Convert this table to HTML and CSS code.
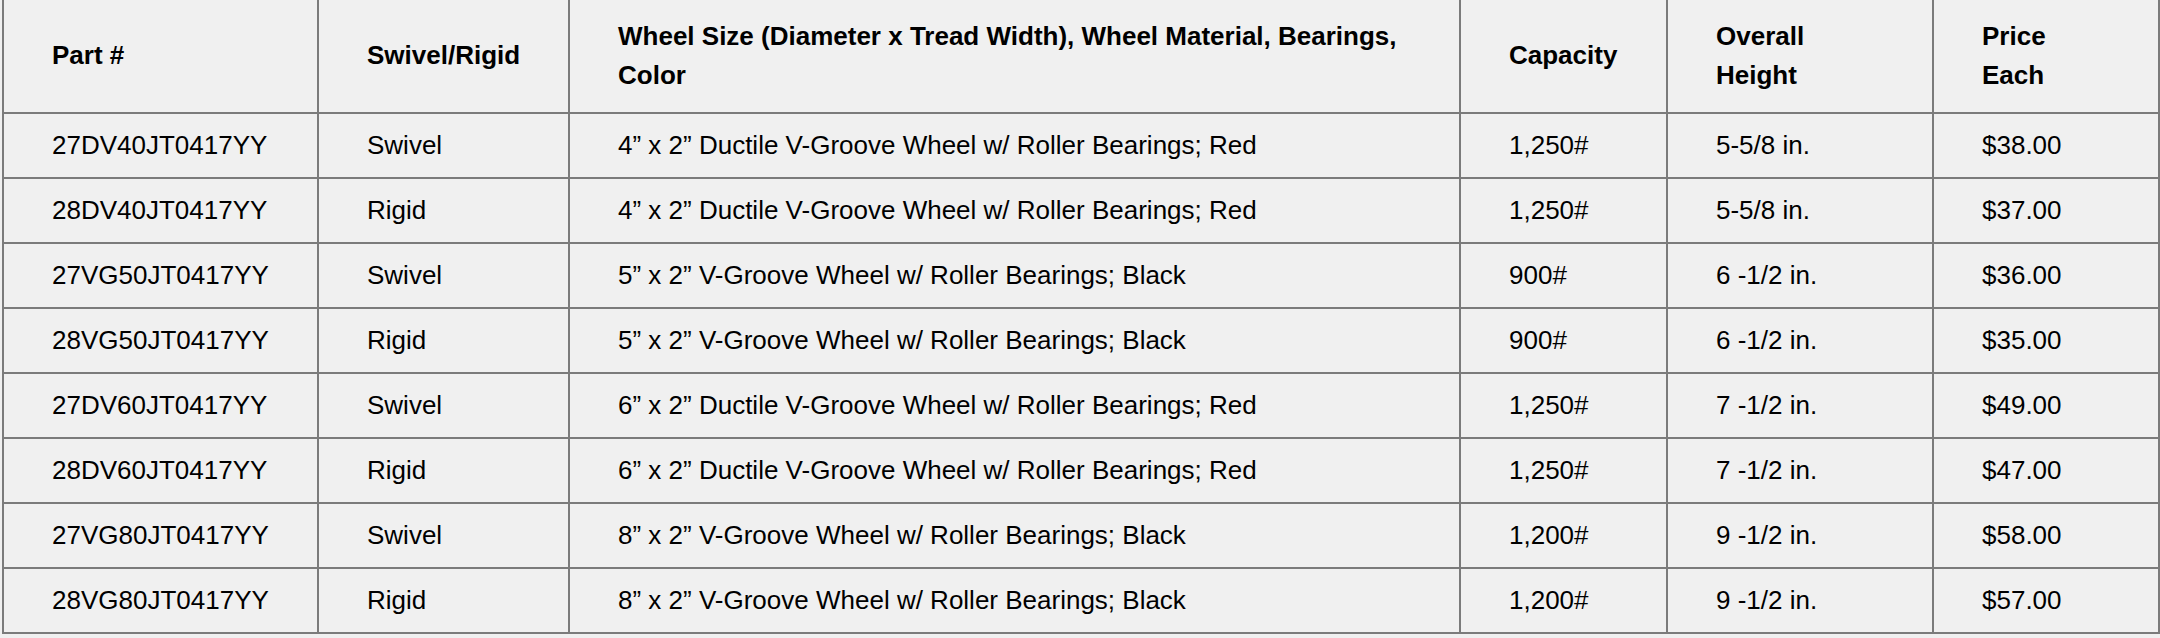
FILE: index.html
```html
<!DOCTYPE html>
<html lang="en">
<head>
<meta charset="utf-8">
<title>V-Groove Casters</title>
<link rel="stylesheet" href="styles.css">
</head>
<body>
<table class="spec-table">
  <colgroup>
    <col class="c-part">
    <col class="c-type">
    <col class="c-wheel">
    <col class="c-cap">
    <col class="c-height">
    <col class="c-price">
  </colgroup>
  <thead>
    <tr>
      <th>Part #</th>
      <th>Swivel/Rigid</th>
      <th>Wheel Size (Diameter x Tread Width), Wheel Material, Bearings, Color</th>
      <th>Capacity</th>
      <th>Overall<br>Height</th>
      <th>Price<br>Each</th>
    </tr>
  </thead>
  <tbody>
    <tr><td>27DV40JT0417YY</td><td>Swivel</td><td>4” x 2” Ductile V-Groove Wheel w/ Roller Bearings; Red</td><td>1,250#</td><td>5-5/8 in.</td><td>$38.00</td></tr>
    <tr><td>28DV40JT0417YY</td><td>Rigid</td><td>4” x 2” Ductile V-Groove Wheel w/ Roller Bearings; Red</td><td>1,250#</td><td>5-5/8 in.</td><td>$37.00</td></tr>
    <tr><td>27VG50JT0417YY</td><td>Swivel</td><td>5” x 2” V-Groove Wheel w/ Roller Bearings; Black</td><td>900#</td><td>6 -1/2 in.</td><td>$36.00</td></tr>
    <tr><td>28VG50JT0417YY</td><td>Rigid</td><td>5” x 2” V-Groove Wheel w/ Roller Bearings; Black</td><td>900#</td><td>6 -1/2 in.</td><td>$35.00</td></tr>
    <tr><td>27DV60JT0417YY</td><td>Swivel</td><td>6” x 2” Ductile V-Groove Wheel w/ Roller Bearings; Red</td><td>1,250#</td><td>7 -1/2 in.</td><td>$49.00</td></tr>
    <tr><td>28DV60JT0417YY</td><td>Rigid</td><td>6” x 2” Ductile V-Groove Wheel w/ Roller Bearings; Red</td><td>1,250#</td><td>7 -1/2 in.</td><td>$47.00</td></tr>
    <tr><td>27VG80JT0417YY</td><td>Swivel</td><td>8” x 2” V-Groove Wheel w/ Roller Bearings; Black</td><td>1,200#</td><td>9 -1/2 in.</td><td>$58.00</td></tr>
    <tr><td>28VG80JT0417YY</td><td>Rigid</td><td>8” x 2” V-Groove Wheel w/ Roller Bearings; Black</td><td>1,200#</td><td>9 -1/2 in.</td><td>$57.00</td></tr>
  </tbody>
</table>
</body>
</html>
```
FILE: styles.css
```css
html, body {
  margin: 0;
  padding: 0;
  background: #f0f0f0;
}

body {
  font-family: "Liberation Sans", Arial, Helvetica, sans-serif;
  color: #000;
  overflow: hidden;
}

.spec-table {
  width: 2158px;
  margin: -3px 0 0 2px;
  border-collapse: collapse;
  table-layout: fixed;
  font-size: 26px;
}

.c-part { width: 315px; }
.c-type { width: 251px; }
.c-wheel { width: 891px; }
.c-cap { width: 207px; }
.c-height { width: 266px; }
.c-price { width: 226px; }

.spec-table th,
.spec-table td {
  border: 2px solid #7b7b7b;
  text-align: left;
  vertical-align: middle;
  padding: 12px 48px;
  line-height: 39px;
  font-weight: normal;
}

.spec-table th {
  font-weight: bold;
  line-height: 38.5px;
  padding-top: 18px;
  padding-bottom: 18px;
}
```
